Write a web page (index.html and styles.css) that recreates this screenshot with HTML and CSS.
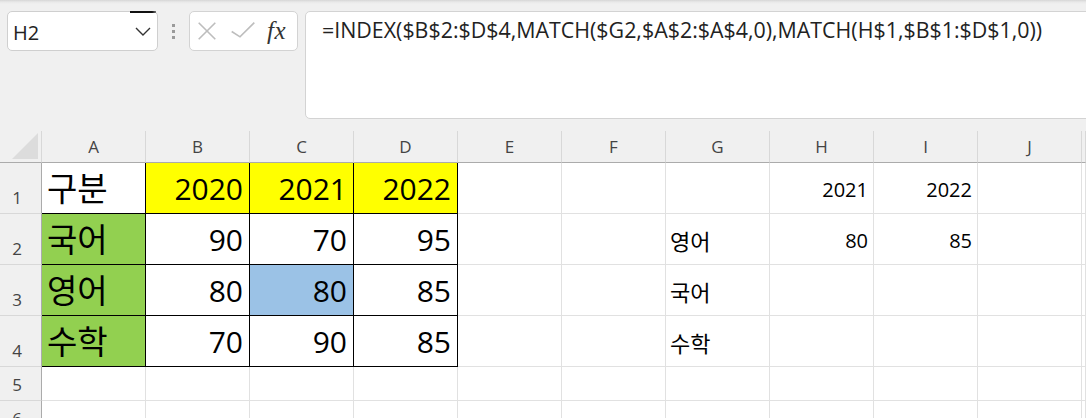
FILE: index.html
```html
<!DOCTYPE html>
<html lang="ko">
<head>
<meta charset="utf-8">
<title>Excel</title>
<link rel="stylesheet" href="styles.css">
</head>
<body>
<div class="app">
  <div class="toolbar">
    <div class="namebox">
      <span class="name">H2</span>
      <svg class="chev" width="16" height="9" viewBox="0 0 16 9"><polyline points="1,1 8,8 15,1" fill="none" stroke="#333" stroke-width="1.4"/></svg>
    </div>
    <div class="grip"><i></i><i></i><i></i></div>
    <div class="fxbox">
      <svg class="ico-x" width="18" height="18" viewBox="0 0 18 18"><path d="M0.7 0.7 L17.3 17.3 M17.3 0.7 L0.7 17.3" stroke="#bdbdbd" stroke-width="1.6" fill="none"/></svg>
      <svg class="ico-ok" width="24" height="16" viewBox="0 0 24 16"><polyline points="0.7,9.5 9,14.8 23.3,0.6" stroke="#bdbdbd" stroke-width="1.6" fill="none"/></svg>
      <span class="fx">fx</span>
    </div>
    <div class="formula">=INDEX($B$2:$D$4,MATCH($G2,$A$2:$A$4,0),MATCH(H$1,$B$1:$D$1,0))</div>
  </div>

  <div class="sheet">
    <!-- header row -->
    <div class="c corner"><svg width="28" height="28" viewBox="0 0 28 28"><polygon points="27,1 27,27 1,27" fill="#dcdcdc"/></svg></div>
    <div class="c ch">A</div>
    <div class="c ch">B</div>
    <div class="c ch">C</div>
    <div class="c ch">D</div>
    <div class="c ch">E</div>
    <div class="c ch">F</div>
    <div class="c ch">G</div>
    <div class="c ch">H</div>
    <div class="c ch">I</div>
    <div class="c ch">J</div>
    <div class="c ch"></div>

    <!-- row 1 -->
    <div class="c rh">1</div>
    <div class="c big ko bk">구분</div>
    <div class="c big r bk yel">2020</div>
    <div class="c big r bk yel">2021</div>
    <div class="c big r bk yel">2022</div>
    <div class="c"></div>
    <div class="c"></div>
    <div class="c"></div>
    <div class="c sm r">2021</div>
    <div class="c sm r">2022</div>
    <div class="c"></div>
    <div class="c"></div>

    <!-- row 2 -->
    <div class="c rh">2</div>
    <div class="c big ko bk grn">국어</div>
    <div class="c big r bk">90</div>
    <div class="c big r bk">70</div>
    <div class="c big r bk">95</div>
    <div class="c"></div>
    <div class="c"></div>
    <div class="c sm kos">영어</div>
    <div class="c sm r">80</div>
    <div class="c sm r">85</div>
    <div class="c"></div>
    <div class="c"></div>

    <!-- row 3 -->
    <div class="c rh">3</div>
    <div class="c big ko bk grn">영어</div>
    <div class="c big r bk">80</div>
    <div class="c big r bk blu">80</div>
    <div class="c big r bk">85</div>
    <div class="c"></div>
    <div class="c"></div>
    <div class="c sm kos">국어</div>
    <div class="c"></div>
    <div class="c"></div>
    <div class="c"></div>
    <div class="c"></div>

    <!-- row 4 -->
    <div class="c rh">4</div>
    <div class="c big ko bk grn">수학</div>
    <div class="c big r bk">70</div>
    <div class="c big r bk">90</div>
    <div class="c big r bk">85</div>
    <div class="c"></div>
    <div class="c"></div>
    <div class="c sm kos">수학</div>
    <div class="c"></div>
    <div class="c"></div>
    <div class="c"></div>
    <div class="c"></div>

    <!-- row 5 -->
    <div class="c rh">5</div>
    <div class="c"></div>
    <div class="c"></div>
    <div class="c"></div>
    <div class="c"></div>
    <div class="c"></div>
    <div class="c"></div>
    <div class="c"></div>
    <div class="c"></div>
    <div class="c"></div>
    <div class="c"></div>
    <div class="c"></div>

    <!-- row 6 -->
    <div class="c rh">6</div>
    <div class="c"></div>
    <div class="c"></div>
    <div class="c"></div>
    <div class="c"></div>
    <div class="c"></div>
    <div class="c"></div>
    <div class="c"></div>
    <div class="c"></div>
    <div class="c"></div>
    <div class="c"></div>
    <div class="c"></div>
  </div>
</div>
</body>
</html>
```

FILE: styles.css
```css
* { box-sizing: border-box; }

html, body {
  margin: 0;
  padding: 0;
  width: 1086px;
  height: 418px;
  overflow: hidden;
  background: #f0f0f0;
  font-family: "Open Sans", "Noto Sans CJK KR", sans-serif;
}

.app {
  width: 1086px;
  height: 418px;
  overflow: hidden;
  display: flex;
  flex-direction: column;
}

/* ---------- toolbar ---------- */
.toolbar {
  height: 131px;
  flex: none;
  display: flex;
  align-items: flex-start;
  padding: 11px 0 0 7px;
  background: linear-gradient(#d6d6d6 0, #e9e9e9 2px, #f0f0f0 4px, #f0f0f0 100%);
}

.namebox {
  position: relative;
  width: 151px;
  height: 40px;
  flex: none;
  background: #fff;
  border: 1px solid #cfcfcf;
  border-radius: 5px;
  display: flex;
  align-items: center;
  justify-content: space-between;
  padding: 4px 6px 0 5px;
}

.namebox::after {
  content: "";
  position: absolute;
  left: 122px;
  top: -1px;
  width: 26px;
  height: 2px;
  background: linear-gradient(90deg, #111 0, #111 85%, #777 100%);
}

.name {
  font-size: 20px;
  line-height: 24px;
  color: #222;
}

.chev { display: block; margin-bottom: 3px; }

.grip {
  width: 31px;
  height: 40px;
  flex: none;
  display: flex;
  flex-direction: column;
  align-items: center;
  justify-content: center;
  gap: 3px;
}

.grip i {
  display: block;
  width: 3px;
  height: 3px;
  background: #9a9a9a;
}

.fxbox {
  width: 109px;
  height: 40px;
  flex: none;
  background: #fff;
  border: 1px solid #d3d3d3;
  border-radius: 5px;
  display: flex;
  align-items: center;
  padding-left: 8px;
}

.ico-x { display: block; flex: none; }
.ico-ok { display: block; flex: none; margin-left: 15px; margin-top: -2px; }

.fx {
  margin-left: 12px;
  font-family: "Liberation Serif", "Times New Roman", serif;
  font-style: italic;
  font-size: 25px;
  line-height: 26px;
  color: #333;
  letter-spacing: 0.5px;
}

.formula {
  flex: 1;
  height: 108px;
  margin-left: 7px;
  margin-right: -20px;
  background: #fff;
  border: 1px solid #d3d3d3;
  border-radius: 5px;
  padding: 3px 0 0 16px;
  font-size: 21.4px;
  line-height: 30px;
  color: #222;
  white-space: nowrap;
}

/* ---------- sheet ---------- */
.sheet {
  flex: none;
  height: 287px;
  overflow: hidden;
  display: grid;
  grid-template-columns: 42px repeat(10, 104px) 1fr;
  grid-template-rows: 32px 51px 51px 51px 51px 34px 34px;
  background: #fff;
}

.c {
  border-right: 1px solid #e1e1e1;
  border-bottom: 1px solid #e1e1e1;
  display: flex;
  align-items: flex-end;
  overflow: hidden;
  white-space: nowrap;
  color: #000;
  min-width: 0;
}

.corner {
  background: #f0f0f0;
  border-right-color: #d8d8d8;
  border-bottom-color: #ababab;
  align-items: flex-end;
  justify-content: flex-end;
  padding: 0 2px 2px 0;
}

.corner svg { display: block; }

.ch {
  background: #f0f0f0;
  border-right-color: #d8d8d8;
  border-bottom-color: #ababab;
  align-items: center;
  justify-content: center;
  font-size: 17px;
  line-height: 20px;
  color: #444;
}

.rh {
  background: #f0f0f0;
  border-right-color: #ababab;
  border-bottom-color: #d8d8d8;
  justify-content: center;
  padding: 0 7px 5px 0;
  font-size: 17px;
  line-height: 20px;
  color: #444;
}

.big {
  font-size: 30px;
  line-height: 34px;
  padding: 0 6px 7px 6px;
}

.ko { font-size: 33px; padding-left: 5px; }

.sm {
  font-size: 20px;
  line-height: 24px;
  padding: 0 5px 11px 5px;
}

.kos { font-size: 22px; padding-left: 4px; }

.r { justify-content: flex-end; }

.bk {
  border-right-color: #000;
  border-bottom-color: #000;
}

.yel { background: #ffff00; }
.grn { background: #92d050; }
.blu { background: #9bc2e6; }
```
